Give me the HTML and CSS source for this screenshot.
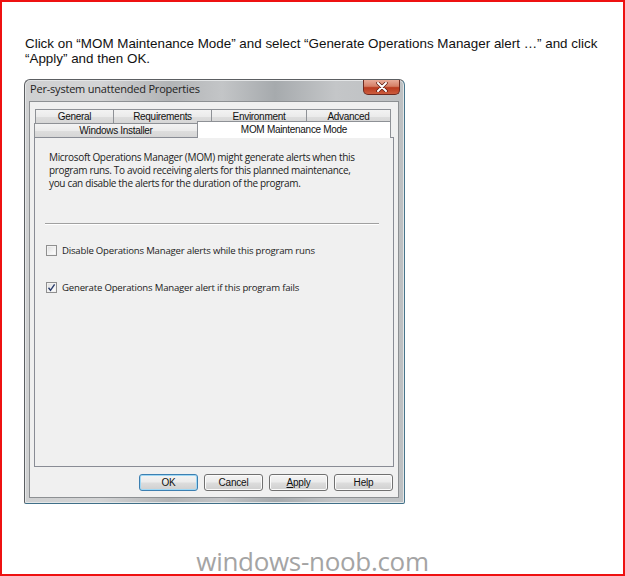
FILE: index.html
```html
<!DOCTYPE html>
<html>
<head>
<meta charset="utf-8">
<link rel="stylesheet" href="styles.css">
</head>
<body>
<div class="page">
  <p class="intro">Click on “MOM Maintenance Mode” and select “Generate Operations Manager alert …” and click “Apply” and then OK.</p>
  <div class="dialog">
    <div class="titlebar">
      <span class="title">Per-system unattended Properties</span>
      <span class="close"><svg width="12" height="10" viewBox="0 0 12 10"><path d="M2 1 L10 9 M10 1 L2 9" stroke="#5a1a10" stroke-width="3.4" stroke-linecap="round"/><path d="M2 1 L10 9 M10 1 L2 9" stroke="#ffffff" stroke-width="2" stroke-linecap="round"/></svg></span>
    </div>
    <div class="client">
      <div class="tabs">
        <div class="tabrow row1">
          <div class="tab t-general">General</div>
          <div class="tab t-req">Requirements</div>
          <div class="tab t-env">Environment</div>
          <div class="tab t-adv">Advanced</div>
        </div>
        <div class="tabrow row2">
          <div class="tab t-wi">Windows Installer</div>
          <div class="tab t-mom active">MOM Maintenance Mode</div>
        </div>
      </div>
      <div class="panel">
        <p class="desc">Microsoft Operations Manager (MOM) might generate alerts when this program runs. To avoid receiving alerts for this planned maintenance, you can disable the alerts for the duration of the program.</p>
        <div class="sep"></div>
        <label class="check c1"><span class="box"></span><span>Disable Operations Manager alerts while this program runs</span></label>
        <label class="check c2"><span class="box checked"><svg width="9" height="9" viewBox="0 0 9 9"><path d="M1.5 4.8 L3.5 7.3 L7.6 1.3" fill="none" stroke="#2c3f6e" stroke-width="1.4"/></svg></span><span>Generate Operations Manager alert if this program fails</span></label>
      </div>
      <div class="buttons">
        <button class="btn default">OK</button>
        <button class="btn">Cancel</button>
        <button class="btn"><u>A</u>pply</button>
        <button class="btn">Help</button>
      </div>
    </div>
  </div>
  <div class="watermark">windows-noob.com</div>
</div>
</body>
</html>
```

FILE: styles.css
```css
html, body {
  margin: 0;
  padding: 0;
  background: #ffffff;
}
.page {
  box-sizing: border-box;
  width: 625px;
  height: 576px;
  border: 2px solid #ee1111;
  padding: 34px 0 0 23px;
  position: relative;
  font-family: "Liberation Sans", Arial, sans-serif;
}
.intro {
  margin: 0;
  width: 585px;
  font-size: 13.4px;
  line-height: 15px;
  color: #111111;
}
.dialog {
  margin: 13px 0 0 -1px;
  width: 381px;
  box-sizing: border-box;
  border: 1px solid #5c5f62;
  border-radius: 6px 6px 2px 2px;
  border-bottom-color: #3f6f88;
  border-right-color: #47748a;
  padding: 0 5px 5px 4px;
  background: linear-gradient(90deg, #cfd0d1 0%, #d3d4d5 20%, #b2b4b6 38%, #c3c5c7 52%, #a6aaad 66%, #c4c6c8 82%, #bdc0c2 100%);
  box-shadow: inset 0 0 0 1px #e4e6e7;
}
.titlebar {
  height: 21px;
  display: flex;
  justify-content: space-between;
  align-items: flex-start;
}
.title {
  font-family: "Open Sans", "Liberation Sans", sans-serif;
  font-size: 11px;
  color: #1e1e1e;
  padding: 1px 0 0 1px;
  letter-spacing: -0.2px;
}
.close {
  width: 35px;
  height: 14px;
  margin-right: -1px;
  border: 1px solid #6d2a20;
  border-top: none;
  border-radius: 0 0 5px 5px;
  background: linear-gradient(180deg, #e8ab98 0%, #d57f66 45%, #b93a1e 55%, #cc5d3e 100%);
  display: flex;
  align-items: center;
  justify-content: center;
}
.client {
  background: #f0f0f0;
  border: 1px solid #8d9093;
  padding: 7px 4px 6px 4px;
}
.tabs {
  font-family: "Liberation Sans", Arial, sans-serif;
  font-size: 10px;
  letter-spacing: -0.3px;
  color: #111;
}
.tabrow {
  display: flex;
  height: 14px;
}
.row1 {
  padding-left: 1px;
}
.tab {
  box-sizing: border-box;
  height: 14px;
  line-height: 13px;
  text-align: center;
  border: 1px solid #8e9196;
  border-bottom: none;
  margin-right: -1px;
  background: linear-gradient(180deg, #f3f3f3 0%, #ebebeb 50%, #dedede 51%, #d6d6d6 100%);
}
.t-general { width: 79px; }
.t-req { width: 99px; }
.t-env { width: 96px; }
.t-adv { width: 85px; }
.t-wi { width: 164px; }
.t-mom {
  width: 194px;
}
.tab.active {
  background: #ffffff;
  height: 17px;
  margin-top: -2px;
  position: relative;
  z-index: 2;
  line-height: 15px;
}
.panel {
  height: 330px;
  box-sizing: border-box;
  border: 1px solid #898c95;
  background: #f0f0f0;
  padding: 13px 14px 0 14px;
  font-family: "Open Sans", "Liberation Sans", sans-serif;
  font-size: 10px;
  color: #1c1c1c;
}
.desc {
  margin: 0;
  line-height: 13px;
  width: 320px;
  letter-spacing: -0.33px;
}
.sep {
  margin: 33px 0 0 -4px;
  height: 1px;
  background: #a0a0a0;
  border-bottom: 1px solid #ffffff;
}
.check {
  display: flex;
  align-items: center;
  gap: 5px;
  font-size: 9.6px;
  letter-spacing: -0.2px;
  margin-left: -3px;
}
.c1 { margin-top: 19px; }
.c2 { margin-top: 24px; }
.box {
  box-sizing: border-box;
  width: 11px;
  height: 11px;
  border: 1px solid #8f8f8f;
  background: linear-gradient(135deg, #dcdcdc 0%, #f4f4f4 60%, #ffffff 100%);
  box-shadow: inset 0 0 0 1px #f2f2f2;
  display: flex;
  align-items: center;
  justify-content: center;
}
.buttons {
  display: flex;
  justify-content: flex-end;
  gap: 6px;
  padding: 7px 1px 0 0;
}
.btn {
  box-sizing: border-box;
  width: 59px;
  height: 17px;
  padding: 0;
  border: 1px solid #707070;
  border-radius: 3px;
  background: linear-gradient(180deg, #f4f4f4 0%, #ebebeb 48%, #dddddd 52%, #cfcfcf 100%);
  box-shadow: inset 0 0 0 1px #fbfbfb;
  font-family: "Liberation Sans", Arial, sans-serif;
  font-size: 10px;
  letter-spacing: -0.2px;
  color: #111;
}
.btn.default {
  border-color: #3c7fb1;
  box-shadow: inset 0 0 0 1px #9fd8f5;
}
.btn u {
  text-decoration: underline;
}
.watermark {
  position: absolute;
  left: 0;
  right: 0;
  top: 548px;
  text-align: center;
  font-family: "Open Sans", "Liberation Sans", sans-serif;
  font-size: 26px;
  line-height: 22px;
  color: #a4a4a4;
  letter-spacing: -0.3px;
}
```
